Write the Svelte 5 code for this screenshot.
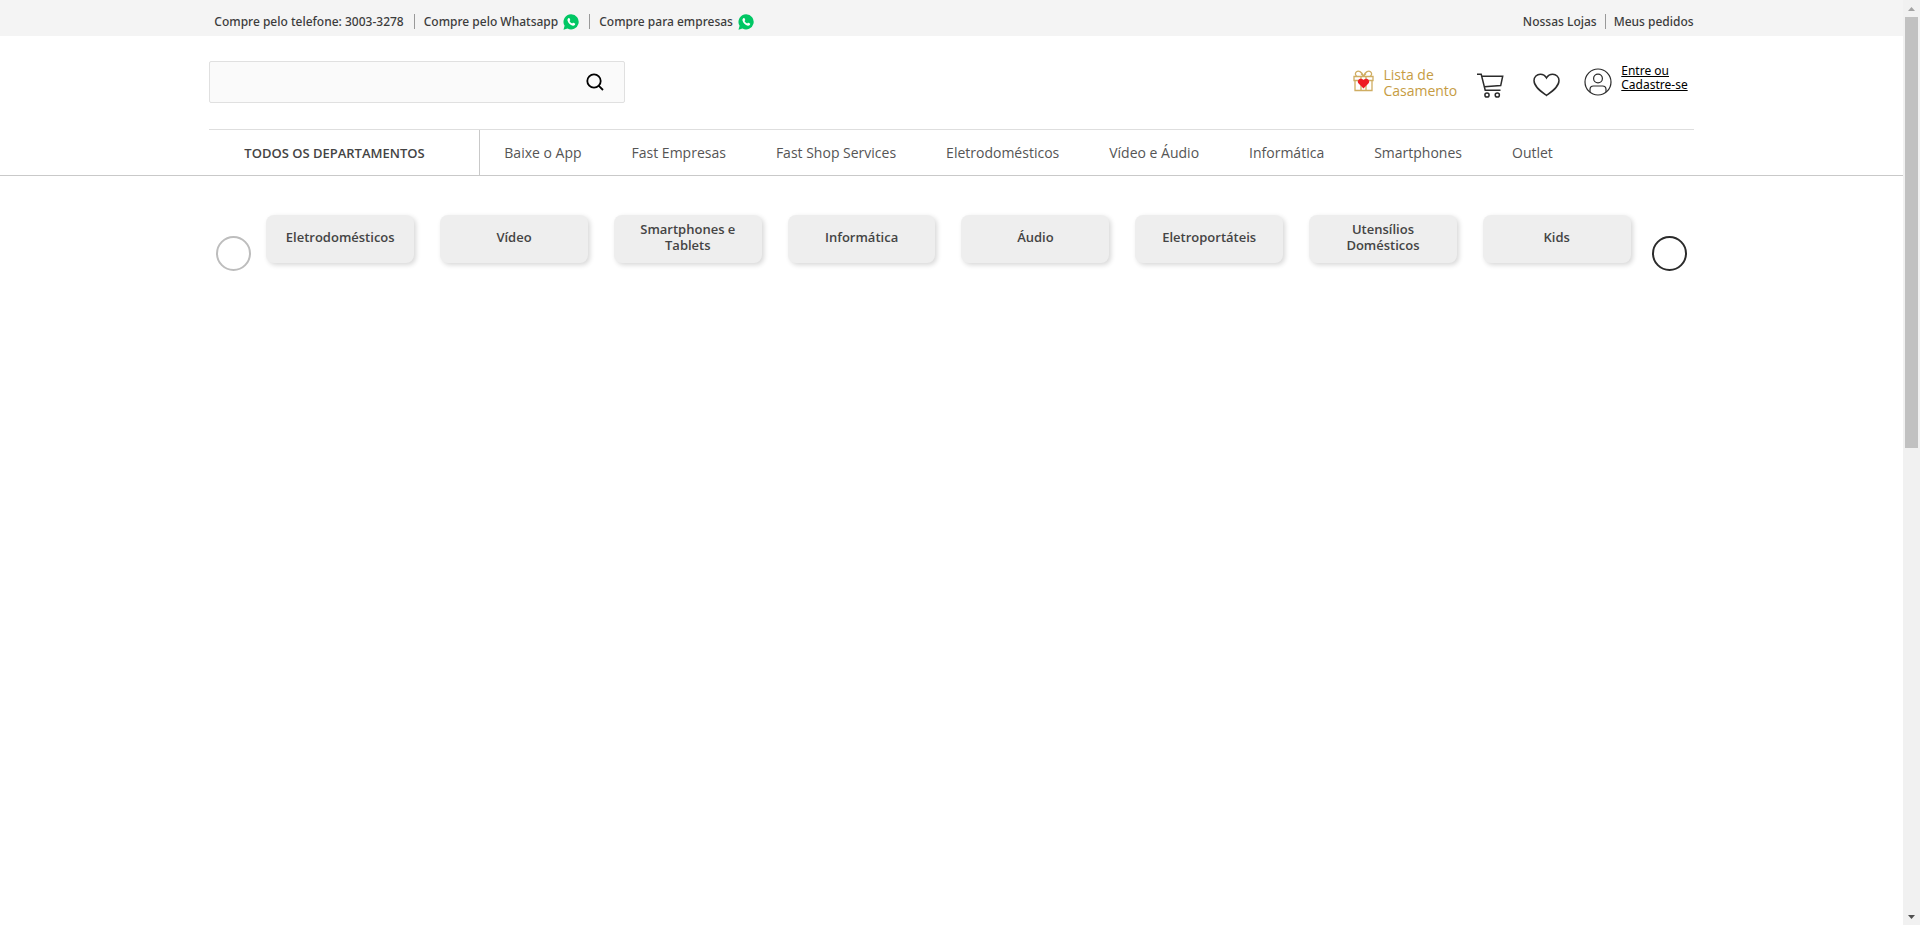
<script>
  const nav = ['Baixe o App', 'Fast Empresas', 'Fast Shop Services', 'Eletrodomésticos', 'Vídeo e Áudio', 'Informática', 'Smartphones', 'Outlet'];
  const categories = ['Eletrodomésticos', 'Vídeo', 'Smartphones e Tablets', 'Informática', 'Áudio', 'Eletroportáteis', 'Utensílios Domésticos', 'Kids'];
</script>

{#snippet whatsapp()}
  <svg width="16" height="16" viewBox="0 0 16 16" aria-hidden="true">
    <path fill="#00c764" d="M8.2.3a7.6 7.6 0 1 1-3.7 14.3L.5 15.7l1.1-3.9A7.6 7.6 0 0 1 8.2.3Z" />
    <path fill="#fff" d="M5.6 4.1c.4-.2.8-.1 1 .3l.6 1.3c.1.3 0 .5-.2.7l-.5.6c.6 1.2 1.4 2 2.7 2.6l.7-.8c.2-.2.4-.2.6-.1l1.4.7c.3.1.4.3.3.6-.2 1.3-1.2 1.9-2.3 1.7C7.2 11.2 5 9 4.5 6.6c-.2-1.1.3-2 1.1-2.5Z" />
  </svg>
{/snippet}

<div class="page">
  <div class="topbar">
    <div class="container topbar-inner">
      <div class="links">
        <a href="#telefone">Compre pelo telefone: 3003-3278</a>
        <a href="#whatsapp">Compre pelo Whatsapp {@render whatsapp()}</a>
        <a href="#empresas">Compre para empresas {@render whatsapp()}</a>
      </div>
      <div class="links account-links">
        <a href="#lojas">Nossas Lojas</a>
        <a href="#pedidos">Meus pedidos</a>
      </div>
    </div>
  </div>

  <header class="container header">
    <form class="search" onsubmit={(e) => e.preventDefault()}>
      <input type="text" aria-label="Buscar" />
      <button type="submit" aria-label="Buscar">
        <svg width="18" height="18" viewBox="0 0 18 18" fill="none" stroke="#000" stroke-width="1.8">
          <circle cx="8" cy="8" r="6.7" />
          <path d="M12.600 12.600 17 17" />
        </svg>
      </button>
    </form>
    <div class="actions">
      <a class="wedding" href="#lista">
        <svg width="21" height="22" viewBox="0 0 21 22" fill="none" stroke="#cfad62" stroke-width="1.3">
          <path d="M1 6.500h19v4H1zM2 10.500v10h17v-10M8 7v13.500M13 7v13.500" />
          <path d="M10.500 6.200C8.500 1.500 5.500.2 3.500 1.700 1.500 3.400 2.600 5.800 4 6.500M10.500 6.200c2-4.700 5-6 7-4.500 2 1.700.9 4.100-.5 4.800M10.500 6.200 8 3.600M10.500 6.200 13 3.600" />
          <path fill="#ee1c25" stroke="none" d="M10.500 18.500 5.600 13.600c-2.600-3 1.600-7 4.900-3.700 3.300-3.300 7.500.7 4.900 3.700Z" />
        </svg>
        <span>Lista de<br />Casamento</span>
      </a>
      <a class="cart" href="#carrinho" aria-label="Carrinho">
        <svg width="27" height="25" viewBox="0 0 27 25" fill="none" stroke="#2b2b2b" stroke-width="1.5">
          <path d="M0 1.200h4.200L8.200 17.200H23.500M4.800 3.200h20.900l-2 9.400L7.300 13.800" />
          <circle cx="10" cy="22" r="2.1" />
          <circle cx="20.300" cy="22" r="2.1" />
        </svg>
      </a>
      <a class="heart" href="#favoritos" aria-label="Favoritos">
        <svg width="27" height="24" viewBox="0 0 27 24" fill="none" stroke="#2b2b2b" stroke-width="1.5">
          <path d="M13.500 22.500C8.500 18.800 1 14 1 7.600 1 4 3.900 1.200 7.300 1.200c2.700 0 4.900 1.400 6.200 3.800 1.300-2.400 3.500-3.800 6.200-3.800C23.100 1.200 26 4 26 7.600c0 6.400-7.500 11.200-12.500 14.900Z" />
        </svg>
      </a>
      <a class="login" href="#entrar">
        <svg width="28" height="28" viewBox="0 0 28 28" fill="none" stroke="#2b2b2b" stroke-width="1.2">
          <circle cx="14" cy="14" r="13" />
          <circle cx="14" cy="10.500" r="4.4" />
          <path d="M6 24.200v-2.700c0-2.300 1.500-3.500 3.500-3.500h9c2 0 3.500 1.200 3.500 3.500v2.700" />
        </svg>
        <span>Entre ou<br />Cadastre-se</span>
      </a>
    </div>
  </header>

  <nav>
    <div class="container nav-inner">
      <button class="departments">TODOS OS DEPARTAMENTOS</button>
      {#each nav as item}
        <a href="#menu">{item}</a>
      {/each}
    </div>
  </nav>

  <main class="container carousel">
    <button class="arrow disabled" aria-label="Anterior"></button>
    <div class="cards">
      {#each categories as category}
        <a href="#categoria">{category}</a>
      {/each}
    </div>
    <button class="arrow" aria-label="Próximo"></button>
  </main>
</div>

<div class="scrollbar" aria-hidden="true">
  <svg width="17" height="17" viewBox="0 0 17 17"><path fill="#a3a3a3" d="M5 11h7L8.500 7Z" /></svg>
  <div class="track"><div class="thumb"></div></div>
  <svg width="17" height="17" viewBox="0 0 17 17"><path fill="#505050" d="M5 7h7l-3.500 4Z" /></svg>
</div>

<style>
  :global(body) {
    margin: 0;
    background: #fff;
    font-family: 'Open Sans', sans-serif;
    color: #333;
  }
  a {
    color: inherit;
    text-decoration: none;
  }
  button {
    font: inherit;
    color: inherit;
    border: 0;
    padding: 0;
    background: none;
    cursor: pointer;
  }
  svg {
    display: block;
    flex: none;
  }
  .page {
    padding-right: 17px;
  }
  .container {
    box-sizing: border-box;
    width: 78%;
    margin: 0 auto;
  }
  .topbar {
    background: #f4f4f4;
    height: 36px;
  }
  .topbar-inner {
    display: flex;
    justify-content: space-between;
    padding-top: 14px;
  }
  .links {
    display: flex;
    padding-left: 5px;
    color: #3c3c3c;
    font-family: 'Noto Sans', sans-serif;
    font-size: 12px;
    font-weight: 500;
    line-height: 16px;
  }
  .links a {
    display: flex;
    gap: 5px;
    height: 15px;
  }
  .links a + a {
    margin-left: 10px;
    padding-left: 9px;
    border-left: 1px solid #999;
  }
  .account-links a + a {
    margin-left: 8px;
    padding-left: 8px;
  }
  .header {
    display: flex;
    justify-content: space-between;
    align-items: flex-start;
    padding: 25px 0 26px;
  }
  .search {
    box-sizing: border-box;
    display: flex;
    width: 28%;
    height: 42px;
    border: 1px solid #e0e0e0;
    border-radius: 2px;
    background: #fafafa;
  }
  .search input {
    flex: 1;
    min-width: 0;
    border: 0;
    padding: 0 16px;
    background: none;
    font: inherit;
    font-size: 14px;
    outline: 0;
  }
  .search button {
    display: grid;
    place-items: center;
    width: 57px;
  }
  .actions {
    display: flex;
    align-items: flex-start;
    padding: 3px 6px 0 0;
  }
  .wedding {
    display: flex;
    gap: 9px;
    padding-top: 3px;
    margin-right: 20px;
    color: #c69c43;
    font-size: 14px;
    line-height: 16px;
  }
  .wedding svg {
    margin-top: 3px;
  }
  .cart {
    margin-right: 29px;
    padding-top: 9px;
  }
  .heart {
    margin-right: 24px;
    padding-top: 9px;
  }
  .login {
    display: flex;
    gap: 9px;
    color: #000;
    font-family: 'Noto Sans', sans-serif;
    font-size: 12px;
    line-height: 14px;
    text-decoration: underline;
  }
  .login svg {
    margin-top: 4px;
  }
  nav {
    border-bottom: 1px solid #c9c9c9;
  }
  .nav-inner {
    display: flex;
    gap: 50px;
    height: 46px;
    border-top: 1px solid #dedede;
    color: #555;
    font-size: 14px;
    line-height: 46px;
    white-space: nowrap;
  }
  .departments {
    box-sizing: border-box;
    width: 271px;
    margin-right: -26px;
    padding-left: 35px;
    border-right: 1px solid #c9c9c9;
    color: #444;
    font-size: 13px;
    font-weight: 600;
    text-align: left;
  }
  .carousel {
    display: flex;
    gap: 15px;
    padding: 39px 7px 0;
  }
  .arrow {
    box-sizing: border-box;
    flex: none;
    width: 35px;
    height: 35px;
    margin: 21px 0 0 6px;
    border: 2px solid #2b2b2b;
    border-radius: 50%;
  }
  .arrow.disabled {
    margin-left: 0;
    border-color: #bdbdbd;
  }
  .cards {
    flex: 1;
    display: grid;
    grid-template-columns: repeat(8, 1fr);
    gap: 26px;
  }
  .cards a {
    box-sizing: border-box;
    display: flex;
    align-items: center;
    justify-content: center;
    height: 48px;
    padding: 0 16px 4px;
    border-radius: 8px;
    background: #eee;
    box-shadow: 2px 2px 5px rgba(0, 0, 0, 0.16);
    color: #444;
    font-size: 13px;
    font-weight: 600;
    line-height: 16px;
    text-align: center;
  }
  .scrollbar {
    position: fixed;
    top: 0;
    right: 0;
    bottom: 0;
    display: flex;
    flex-direction: column;
    width: 17px;
    background: #f1f1f1;
  }
  .track {
    flex: 1;
    padding: 0 2px;
  }
  .thumb {
    height: 48.4%;
    background: #c1c1c1;
  }
</style>
